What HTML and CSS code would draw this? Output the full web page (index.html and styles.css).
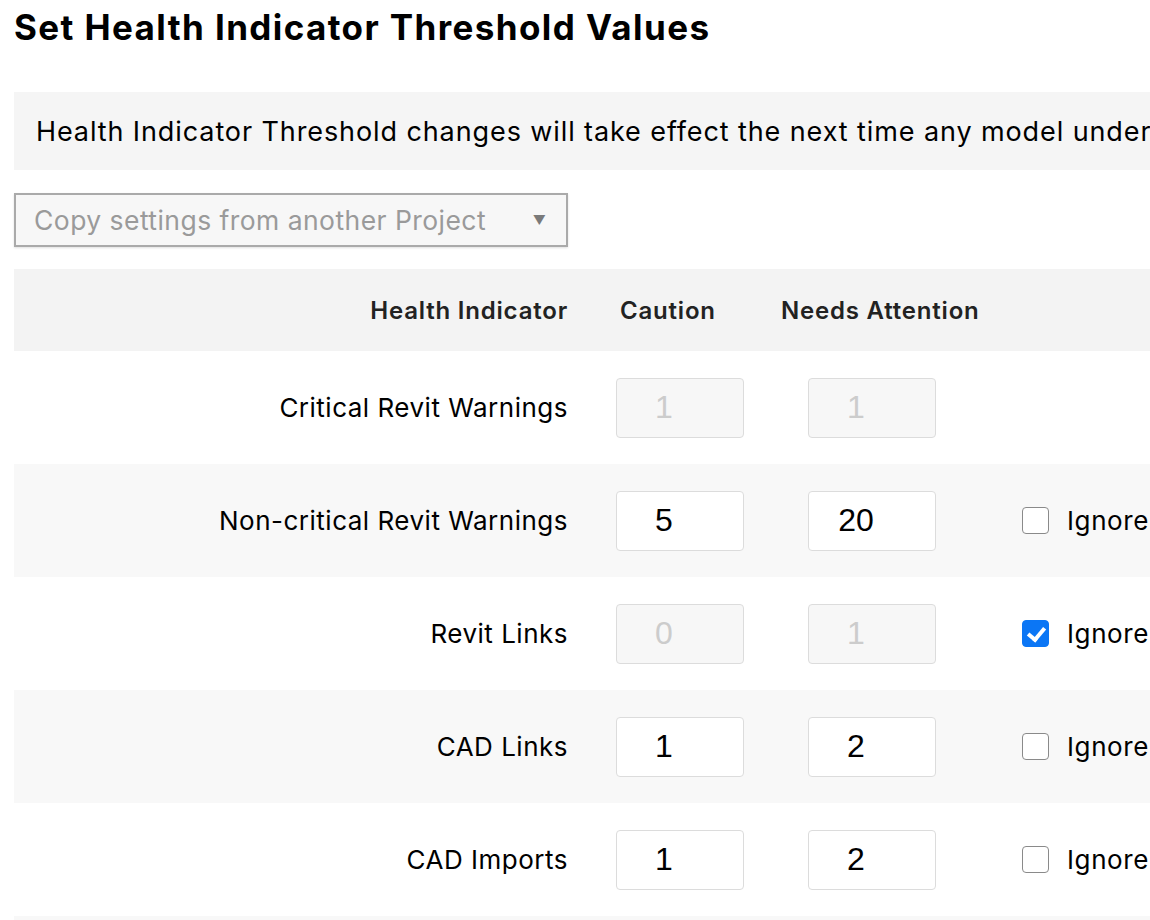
FILE: index.html
```html
<!DOCTYPE html>
<html lang="en">
<head>
<meta charset="utf-8">
<title>Set Health Indicator Threshold Values</title>
<link rel="stylesheet" href="styles.css">
</head>
<body>
<div class="page">
  <h1 class="title">Set Health Indicator Threshold Values</h1>
  <div class="notice">Health Indicator Threshold changes will take effect the next time any model under this Project is published.</div>
  <div class="select">
    <span class="select-text">Copy settings from another Project</span>
    <span class="select-arrow">&#9660;</span>
  </div>
  <div class="table">
    <div class="row head">
      <div class="c-label">Health Indicator</div>
      <div class="c-caution"><span class="h-caution">Caution</span></div>
      <div class="c-needs"><span class="h-needs">Needs Attention</span></div>
      <div class="c-ignore"></div>
    </div>
    <div class="row">
      <div class="c-label">Critical Revit Warnings</div>
      <div class="c-caution"><input class="num" type="text" value="1" disabled></div>
      <div class="c-needs"><input class="num" type="text" value="1" disabled></div>
      <div class="c-ignore"></div>
    </div>
    <div class="row alt">
      <div class="c-label">Non-critical Revit Warnings</div>
      <div class="c-caution"><input class="num" type="text" value="5"></div>
      <div class="c-needs"><input class="num" type="text" value="20"></div>
      <label class="c-ignore"><input class="chk" type="checkbox"><span>Ignore</span></label>
    </div>
    <div class="row">
      <div class="c-label">Revit Links</div>
      <div class="c-caution"><input class="num" type="text" value="0" disabled></div>
      <div class="c-needs"><input class="num" type="text" value="1" disabled></div>
      <label class="c-ignore"><input class="chk" type="checkbox" checked><span>Ignore</span></label>
    </div>
    <div class="row alt">
      <div class="c-label">CAD Links</div>
      <div class="c-caution"><input class="num" type="text" value="1"></div>
      <div class="c-needs"><input class="num" type="text" value="2"></div>
      <label class="c-ignore"><input class="chk" type="checkbox"><span>Ignore</span></label>
    </div>
    <div class="row">
      <div class="c-label">CAD Imports</div>
      <div class="c-caution"><input class="num" type="text" value="1"></div>
      <div class="c-needs"><input class="num" type="text" value="2"></div>
      <label class="c-ignore"><input class="chk" type="checkbox"><span>Ignore</span></label>
    </div>
    <div class="row alt"></div>
  </div>
</div>
</body>
</html>
```

FILE: styles.css
```css
html, body {
  margin: 0;
  padding: 0;
  background: #ffffff;
  overflow: hidden;
}

body {
  font-family: "Inter", "Roboto", "Liberation Sans", sans-serif;
  color: #000;
}

.page {
  width: 1400px;
  padding: 0 0 0 14px;
}

.title {
  margin: 0;
  padding-top: 6px;
  font-size: 35px;
  line-height: 42px;
  font-weight: 700;
  letter-spacing: 1.4px;
  color: #000;
}

.notice {
  margin-top: 44px;
  height: 78px;
  box-sizing: border-box;
  padding: 0 0 0 22px;
  display: flex;
  align-items: center;
  background: #f5f5f5;
  font-size: 27px;
  letter-spacing: 0.9px;
  white-space: nowrap;
  color: #000;
}

.select {
  margin-top: 23px;
  width: 554px;
  height: 54px;
  box-sizing: border-box;
  border: 2px solid #aaaaaa;
  background: #f7f7f7;
  box-shadow: 0 1px 2px rgba(0,0,0,0.12);
  display: flex;
  align-items: center;
  justify-content: space-between;
  padding: 0 20px 0 18px;
}

.select-text {
  font-size: 26.5px;
  letter-spacing: 0.45px;
  color: #9a9a9a;
}

.select-arrow {
  font-size: 13px;
  color: #7a7a7a;
}

.table {
  margin-top: 22px;
}

.row {
  display: flex;
  align-items: center;
  height: 113px;
  background: #ffffff;
}

.row.alt {
  background: #f8f8f8;
}

.row.head {
  height: 82px;
  background: #f3f3f3;
  font-weight: 600;
  font-size: 24px;
  letter-spacing: 0.8px;
  color: #222;
}

.c-label {
  width: 554px;
  flex: none;
  text-align: right;
  font-size: 26px;
  letter-spacing: 0.5px;
  white-space: nowrap;
}

.row.head .c-label {
  font-size: 24px;
  letter-spacing: 0.8px;
}

.c-caution {
  width: 128px;
  margin-left: 48px;
  flex: none;
}

.c-needs {
  width: 128px;
  margin-left: 64px;
  flex: none;
  white-space: nowrap;
}

.h-caution {
  padding-left: 4px;
}

.h-needs {
  margin-left: -27px;
}

.c-ignore {
  margin-left: 86px;
  display: flex;
  align-items: center;
  gap: 18px;
  font-size: 26px;
  letter-spacing: 0.6px;
}

.num {
  width: 128px;
  height: 60px;
  box-sizing: border-box;
  border: 1.5px solid #dcdcdc;
  border-radius: 4px;
  background: #ffffff;
  font-family: "Liberation Sans", Arial, sans-serif;
  font-size: 32px;
  color: #000;
  text-align: center;
  padding: 0 32px 0 0;
  margin: 0;
  outline: none;
}

.num:disabled {
  background: #f7f7f7;
  color: #cccccc;
  -webkit-text-fill-color: #cccccc;
  opacity: 1;
}

.chk {
  appearance: none;
  -webkit-appearance: none;
  width: 27px;
  height: 27px;
  margin: 0;
  border: 1.5px solid #8a8a8a;
  border-radius: 4px;
  background: #ffffff;
  box-sizing: border-box;
  position: relative;
  flex: none;
}

.chk:checked {
  background: #0b76f5;
  border-color: #0b76f5;
}

.chk:checked::after {
  content: "";
  position: absolute;
  left: 8px;
  top: 3px;
  width: 7px;
  height: 13px;
  border: solid #fff;
  border-width: 0 4px 4px 0;
  transform: rotate(40deg);
}
```
